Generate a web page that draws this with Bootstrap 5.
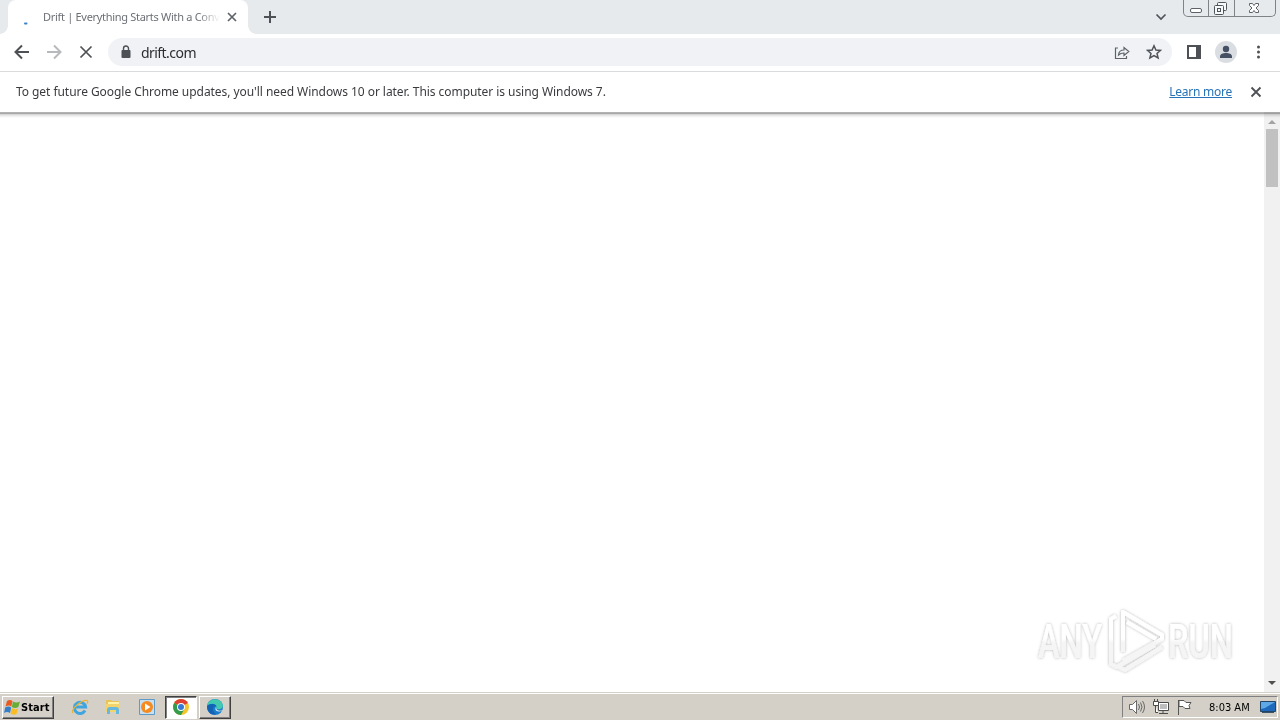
<!DOCTYPE html>
<html lang="en">
<head>
<meta charset="utf-8">
<meta name="viewport" content="width=device-width, initial-scale=1">
<title>Drift</title>
<link href="https://cdn.jsdelivr.net/npm/bootstrap@5.3.0/dist/css/bootstrap.min.css" rel="stylesheet">
<script src="https://cdn.jsdelivr.net/npm/bootstrap@5.3.0/dist/js/bootstrap.bundle.min.js"></script>
<style>
body{font-family:"Noto Sans","Open Sans",sans-serif;font-size:12px;line-height:16px;color:#3a3b3e}
svg{display:block;flex:none}
.tabstrip{height:34px;background:#e7eaed}
.tab-active{width:240px;height:34px;margin-left:8px;background:#fff;border-radius:8px 8px 0 0;padding:0 11px 0 10px}
.tab-active::before,.tab-active::after{content:"";position:absolute;bottom:0;width:8px;height:8px}
.tab-active::before{left:-8px;background:radial-gradient(circle at 0 0,transparent 7.5px,#fff 8px)}
.tab-active::after{right:-8px;background:radial-gradient(circle at 100% 0,transparent 7.5px,#fff 8px)}
.tab-title{width:178px;margin-left:9px;font-size:11px;letter-spacing:-.3px;color:#6c7075;-webkit-mask-image:linear-gradient(90deg,#000 155px,transparent 177px);mask-image:linear-gradient(90deg,#000 155px,transparent 177px)}
.win-controls{width:93px;height:17px;margin-right:4px;border:1px solid #7e8388;border-top:0;border-radius:0 0 5px 5px}
.win-controls>span+span{border-left:1px solid #7e8388}
.toolbar{height:38px;border-bottom:1px solid #d9dbdd;padding:0 12px 2px 12px}
.toolbar .nav-ico{width:20px;margin-right:12px}
.address{height:28px;width:1064px;background:#f0f2f5;border-radius:14px;padding:0 10px}
.host{font-size:14px;letter-spacing:-.55px;color:#2c2d31}
.infobar{height:40px;padding:0 18px 0 16px}
.info-text{letter-spacing:-.055px}
.learn{color:#2873b8;text-decoration:underline;letter-spacing:-.25px}
.edge{height:6px;background:linear-gradient(#b2b2b2 0 1px,#a8a8a8 1px 2px,#d7d7d7 2px 3px,#e7e7e7 3px 4px,#f3f3f3 4px 5px,#fbfbfb 5px);mix-blend-mode:multiply}
.scroll{width:16px;background:#f1f1f1;padding:2px 2px 5px}
.thumb{width:12px;height:58px;background:#c1c1c1;margin-top:4px}
.brand-mark{right:44px;bottom:17px}
.taskbar{height:28px;background:#d4d0c8;border-top:1px solid #d4d0c8;box-shadow:inset 0 1px #fff;padding:3px 2px 1px}
.raised{background:#d4d0c8;border:1px solid;border-color:#fff #404040 #404040 #fff;box-shadow:inset -1px -1px #808080}
.start{width:52px;height:23px;font:bold 11px/16px "DejaVu Sans Condensed",sans-serif;letter-spacing:.1px;color:#000;padding-left:1px}
.pressed{background:#fff;border:1px solid;border-color:#404040 #fff #fff #404040;box-shadow:inset 1px 1px #808080}
.task{width:32px;height:23px}
.task svg{margin-bottom:1px}
.quick{margin-top:3px}
.tray{width:156px;height:22px;border:1px solid;border-color:#808080 #fff #fff #808080;color:#000;font:11px/16px "DejaVu Sans Condensed",sans-serif;padding:0 1px 0 5px}
</style>
</head>
<body class="vh-100 overflow-hidden d-flex flex-column bg-white">
<header>
<div class="tabstrip d-flex">
  <div class="tab-active position-relative d-flex align-items-center">
    <svg width="16" height="16"><rect x="6" y="13.500" width="3.500" height="2" rx="1" fill="#3b83c6"/></svg>
    <div class="tab-title text-nowrap overflow-hidden">Drift | Everything Starts With a Conv</div>
    <svg class="ms-auto" width="10" height="10" viewBox="0 0 10 10" stroke="#5f6368" stroke-width="1.700"><path d="M1 1l8 8M9 1l-8 8"/></svg>
  </div>
  <svg class="ms-3 mt-1" width="12" height="26" stroke="#4e5256" stroke-width="2"><path d="M0 13h12M6 7v12"/></svg>
  <svg class="ms-auto" width="12" height="34" fill="none" stroke="#505459" stroke-width="1.700"><path d="M1.500 14.500L6 19l4.500-4.500"/></svg>
  <div class="win-controls d-flex ms-3">
    <span style="width:24px"><svg width="24" height="16" fill="#fff" stroke="#5d6268"><rect x="6.500" y="8.500" width="11" height="4" rx="1.500"/></svg></span>
    <span style="width:26px"><svg width="24" height="16" fill="#f7f8f9" stroke="#4f545a"><rect x="8.500" y="2.500" width="9" height="8" rx="1"/><rect x="5.500" y="5.500" width="9" height="9" rx="1"/><rect x="8.500" y="8.500" width="3" height="3"/></svg></span>
    <span class="flex-fill"><svg width="40" height="16" fill="#fff" stroke="#5d6268"><path d="M14.500 3.500h3l1.500 2 1.500-2h3v2l-2.500 2.500 2.500 2.500v2h-3l-1.500-2-1.500 2h-3v-2l2.500-2.500-2.500-2.500z"/></svg></span>
  </div>
</div>
<div class="toolbar d-flex align-items-center">
  <svg class="nav-ico" height="20" fill="none" stroke="#4d5054" stroke-width="2"><path d="M17 10H4M10 3.500L3.500 10l6.500 6.500"/></svg>
  <svg class="nav-ico" height="20" fill="none" stroke="#b7b9bc" stroke-width="2"><path d="M3 10h13M10 3.500l6.500 6.500-6.500 6.500"/></svg>
  <svg class="nav-ico" height="20" fill="none" stroke="#4d5054" stroke-width="1.700"><path d="M4.500 4.500l11 11M15.500 4.500l-11 11"/></svg>
  <div class="address d-flex align-items-center">
    <svg width="16" height="16"><rect x="3.500" y="6" width="9" height="8" rx="1" fill="#4d5054"/><path d="M5.500 7V4.500a2.500 2.500 0 0 1 5 0V7" fill="none" stroke="#4d5054" stroke-width="1.400"/></svg>
    <span class="host" style="margin:2px 0 0 7px">drift.com</span>
    <svg class="ms-auto" width="16" height="16" fill="none" stroke="#5f6368" stroke-width="1.200"><path d="M4 4H1.500v10.500h11V12M4.500 11c.3-3.500 2.500-5 5.500-5V3.500l4.800 4-4.800 4V9C7.500 9 6 9.500 4.500 11z"/></svg>
    <svg class="ms-3" width="16" height="16" fill="none" stroke="#4f5358" stroke-width="1.500"><path d="M8 1.800l1.900 4.200 4.600.4-3.500 3 1.100 4.500L8 11.500l-4.100 2.400L5 9.400l-3.500-3L6.100 6z"/></svg>
  </div>
  <svg style="margin-left:14px" width="16" height="16"><path d="M2 2h12v12H2z" fill="none" stroke="#4d5054" stroke-width="2"/><path d="M10 2h4v12h-4z" fill="#4d5054"/></svg>
  <svg style="margin-left:13px" width="22" height="22"><circle cx="11" cy="11" r="11" fill="#dadee3"/><circle cx="11" cy="8" r="3.200" fill="#465064"/><path d="M5 17v-1.500c0-2.500 3-3.500 6-3.500s6 1 6 3.500V17z" fill="#465064"/></svg>
  <svg class="ms-auto" width="20" height="20" fill="#4d5054"><circle cx="10.500" cy="5" r="1.500"/><circle cx="10.500" cy="10" r="1.500"/><circle cx="10.500" cy="15" r="1.500"/></svg>
</div>
<div class="infobar d-flex align-items-center">
  <span class="info-text text-nowrap">To get future Google Chrome updates, you'll need Windows 10 or later. This computer is using Windows 7.</span>
  <a class="learn ms-auto text-nowrap" href="#">Learn more</a>
  <svg style="margin-left:18px" width="12" height="12" stroke="#4d5054" stroke-width="1.800"><path d="M1.500 1.500l9 9M10.500 1.500l-9 9"/></svg>
</div>
</header>
<main class="flex-fill d-flex position-relative">
  <div class="edge position-absolute top-0 start-0 w-100"></div>
  <div class="scroll ms-auto d-flex flex-column align-items-center">
    <svg width="12" height="11"><path d="M2 10l4-4 4 4z" fill="#a3a3a3"/></svg>
    <div class="thumb"></div>
    <svg class="mt-auto" width="12" height="8"><path d="M2 2h8L6 6z" fill="#505050"/></svg>
  </div>
  <svg class="brand-mark position-absolute" width="204" height="70" viewBox="0 0 204 70">
    <defs><linearGradient id="fade" gradientUnits="userSpaceOnUse" x1="0" y1="0" x2="0" y2="70"><stop offset=".48" stop-color="#fff"/><stop offset=".54" stop-color="#f5f5f5"/></linearGradient>
    <filter id="halo" filterUnits="userSpaceOnUse" x="0" y="0" width="204" height="70"><feDropShadow dx="0" dy="0" stdDeviation="1.600" flood-color="#000" flood-opacity=".3"/></filter></defs>
    <g filter="url(#halo)">
      <g fill="url(#fade)" font-family="Roboto,sans-serif" font-weight="500" font-size="48"><text x="6" y="53" textLength="64" lengthAdjust="spacingAndGlyphs">ANY</text><text x="136" y="53" textLength="65" lengthAdjust="spacingAndGlyphs">RUN</text></g>
      <path fill="none" stroke="url(#fade)" stroke-width="4" stroke-linejoin="round" d="M91 47V7L130 30v4L91 56M84 11l-5 3v45l6 3 38-22M95 17l29 17M87 62l6 3 37-23"/>
    </g>
  </svg>
</main>
<footer class="taskbar d-flex align-items-start">
  <div class="start raised d-flex align-items-center">
    <svg width="17" height="18"><path d="M3 2q3-2 5.500 0L7.300 7.500Q5 5.500 1.500 7.500z" fill="#e85a22"/><path d="M9 2.500q3.500 2 7 0L14.300 8Q11 10 7.800 8z" fill="#67ad35"/><path d="M1.200 8.500q3.300-2 6 0L6 14q-3-2-6 0z" fill="#357fc9"/><path d="M7.800 9q3 2 6.200.5L12.500 15q-3 1.500-6-.5z" fill="#f9bd23"/></svg>
    <span>Start</span>
  </div>
  <svg class="quick" style="margin-left:17px" width="18" height="16"><path d="M14 11.500A5.600 5.600 0 1 1 14.600 8H5" fill="none" stroke="#3fa5df" stroke-width="3"/><path d="M2 14C-1 10 12 0 16 1.500q1.500 1 0 3" fill="none" stroke="#e9b436" stroke-width="1.300"/></svg>
  <svg class="quick" style="margin-left:16px" width="16" height="16"><path d="M1 1h5l1 1h7v10H1z" fill="#e7c35a"/><path d="M3 3h11v7H3z" fill="#fff1a5"/><path d="M1 5h14v8H1z" fill="#f3d36c"/><path d="M2 15v-4q0-3 3-3h6q3 0 3 3v4h-3v-4H5v4z" fill="#67b8df"/></svg>
  <svg class="quick" style="margin-left:18px" width="16" height="16"><path d="M.5.500h15v15H.5z" fill="#c9dfef" stroke="#5f9bc9"/><circle cx="8" cy="8" r="6" fill="#f48a20"/><path d="M6 4.500L11.500 8 6 11.500z" fill="#fff"/></svg>
  <div class="task pressed d-flex align-items-center justify-content-center" style="margin-left:10px">
    <svg width="16" height="16"><circle cx="8" cy="8" r="8" fill="#f3c62d"/><path d="M8 8L1.100 4A8 8 0 0 1 14.900 4z" fill="#df4034"/><path d="M8 8L1.100 4A8 8 0 0 0 8 16l3.500-6z" fill="#329b4e"/><circle cx="8" cy="8" r="4" fill="#fff"/><circle cx="8" cy="8" r="3" fill="#3779d6"/></svg>
  </div>
  <div class="task raised d-flex align-items-center justify-content-center" style="margin-left:2px">
    <svg width="16" height="16"><circle cx="8" cy="8" r="8" fill="#187dcc"/><path d="M0 7C1-1 13-2 15.500 5c1.500 4-2 6-5 5-2-.5-1-2-1-3C8 4 3 4 0 7z" fill="#42c9b0"/><path d="M0 7c4-3 8-2 9 0-4 0-4 6 0 8-5 2-9-2-9-8z" fill="#1263b4"/><path d="M9 8c0 4 4 4.500 7 3-1 1.500-5 2-7 .5-.8-1-.7-2.500 0-3.500z" fill="#e7f1ee"/></svg>
  </div>
  <div class="tray d-flex align-items-center ms-auto">
    <svg width="18" height="18" fill="#fff" stroke="#686868"><path d="M1.500 6.500h3l4-4v13l-4-4h-3z"/><path d="M10.500 6q2 3 0 6M12.500 4.500q3 4.500 0 9M14.500 3q4 6 0 12" fill="none"/></svg>
    <svg style="margin-left:6px" width="18" height="18" fill="#fff" stroke="#4b4b4b"><path d="M6.500 4.500h10v8h-10zM7 15.500h9M11 13v2M3.500 7v7.500H6"/><path d="M8 6h7v5H8z" fill="#bdbdbd" stroke="none"/><path d="M1.500 3.500h5v4h-5zM2.500 1v2M5.500 1v2"/></svg>
    <svg style="margin-left:6px" width="18" height="18" fill="#fff" stroke="#555"><path d="M2.500 2v15M3 2.500h5l2 2h5l-2 3 1 3H9l-2-2H3z"/></svg>
    <span class="text-nowrap" style="margin:1px 0 0 15px;letter-spacing:0">8:03 AM</span>
    <svg class="ms-auto" width="16" height="16"><path d="M.5 2.500h15v10H.5z" fill="#1f69bd" stroke="#234566"/><path d="M1 3h14L5 9 1 10z" fill="#5fa9e6"/><path d="M2 13h12v1H2z" fill="#3b5366"/></svg>
  </div>
</footer>
</body>
</html>
